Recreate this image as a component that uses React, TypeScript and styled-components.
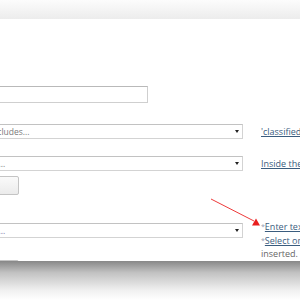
import styled, { createGlobalStyle } from "styled-components";

const GlobalStyle = createGlobalStyle`
  html, body {
    margin: 0;
    padding: 0;
    background: #fff;
  }
  body {
    width: 300px;
    height: 300px;
    overflow: hidden;
    font-family: "Open Sans", "Liberation Sans", sans-serif;
  }
`;

const Screen = styled.div`
  position: relative;
  width: 300px;
  height: 300px;
  display: flex;
  flex-direction: column;
  overflow: hidden;
`;

const TopShade = styled.div`
  flex: none;
  height: 19px;
  background: linear-gradient(#fcfcfc, #ececec);
`;

const Panel = styled.div`
  flex: none;
  height: 242px;
  overflow: hidden;
  background: #fff;
`;

const BottomShade = styled.div`
  flex: 1;
  background: linear-gradient(#878787 0%, #c2c2c2 30%, #f0f0f0 75%, #fff 100%);
`;

const Form = styled.div`
  display: flex;
  flex-direction: column;
  margin-left: -30px;
  padding-top: 67px;
`;

const Row = styled.div<{ $top: number; $align?: string }>`
  display: grid;
  grid-template-columns: 273px auto;
  column-gap: 18px;
  align-items: ${(p) => p.$align ?? "center"};
  margin-top: ${(p) => p.$top}px;
`;

const Stack = styled.div`
  display: flex;
  flex-direction: column;
  align-items: flex-start;
`;

const TextInput = styled.div`
  box-sizing: border-box;
  width: 178px;
  height: 17px;
  border: 1px solid #cfcfcf;
  border-top-color: #b9b9b9;
  background: #fff;
`;

const Select = styled.div<{ $tint?: string; $lead?: number }>`
  box-sizing: border-box;
  display: flex;
  align-items: center;
  justify-content: space-between;
  width: 273px;
  height: 15px;
  padding: 0 3px 0 ${(p) => p.$lead ?? 4}px;
  border: 1px solid #d3d3d3;
  border-top-color: #c2c2c2;
  background: #fff;
  font-size: 8.5px;
  color: ${(p) => p.$tint ?? "#7a7a7a"};
  white-space: nowrap;
`;

const Caret = styled.span`
  width: 0;
  height: 0;
  border-left: 2.5px solid transparent;
  border-right: 2.5px solid transparent;
  border-top: 3px solid #222;
`;

const Button = styled.div<{ $top?: number }>`
  box-sizing: border-box;
  display: flex;
  align-items: center;
  width: 49px;
  height: 19px;
  margin-top: ${(p) => p.$top ?? 0}px;
  padding-left: 5px;
  border: 1px solid #c4c4c4;
  border-radius: 2px;
  background: linear-gradient(#fafafa, #ebebeb);
  font-size: 8.5px;
  color: #555;
`;

const Aside = styled.div<{ $shift?: number }>`
  margin-top: ${(p) => p.$shift ?? 0}px;
  font-size: 9px;
  line-height: 13.5px;
  color: #666;
  white-space: nowrap;
`;

const Link = styled.a`
  color: #3a5c7e;
  text-decoration: underline;
`;

const Star = styled.span`
  color: #8f9bb0;
  font-size: 7px;
  vertical-align: top;
`;

const Overlay = styled.svg`
  position: absolute;
  left: 0;
  top: 0;
  pointer-events: none;
`;

export default function App() {
  return (
    <>
      <GlobalStyle />
      <Screen>
        <TopShade />
        <Panel>
          <Form>
            <Row $top={0}>
              <TextInput />
            </Row>
            <Row $top={21}>
              <Select $lead={0}>
                <span>Title includes...</span>
                <Caret />
              </Select>
              <Aside>
                <Link>'classified'</Link> only
              </Aside>
            </Row>
            <Row $top={17}>
              <Select>
                <span>Select...</span>
                <Caret />
              </Select>
              <Aside>
                <Link>Inside the folder</Link>
              </Aside>
            </Row>
            <Row $top={5}>
              <Button>Add</Button>
            </Row>
            <Row $top={28} $align="start">
              <Stack>
                <Select $tint="#7d74a8">
                  <span>Select...</span>
                  <Caret />
                </Select>
                <Button $top={22}>Save</Button>
              </Stack>
              <Aside $shift={-3}>
                <div>
                  <Star>*</Star>
                  <Link>Enter text to search</Link>
                </div>
                <div>
                  <Star>*</Star>
                  <Link>Select one or more</Link> values
                </div>
                <div>inserted.</div>
              </Aside>
            </Row>
          </Form>
        </Panel>
        <BottomShade />
        <Overlay width="300" height="300" viewBox="0 0 300 300">
          <line x1="211" y1="199" x2="254" y2="221" stroke="#ee3a3a" strokeWidth="1" />
          <polygon points="252,225.5 256,218.5 260,225.5" fill="#e81e1e" />
        </Overlay>
      </Screen>
    </>
  );
}
